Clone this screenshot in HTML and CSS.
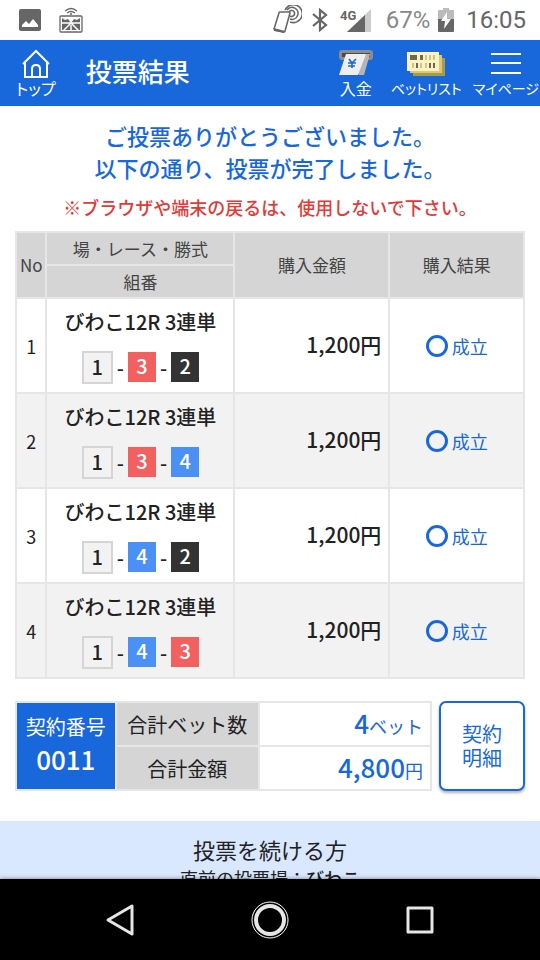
FILE: index.html
```
<!DOCTYPE html>
<html lang="ja">
  <head>
    <meta charset="UTF-8" />
    <meta name="viewport" content="width=device-width, initial-scale=1.0" />
    <title>投票結果</title>
    <link rel="stylesheet" href="styles.css">
  </head>
  <body>
    <div class="status">
      <svg class="status-photo" width="22" height="22" viewBox="0 0 22 22">
        <rect width="22" height="22" rx="2" fill="#666" />
        <path d="M3 18v-2l4-4 3 3 4-5 5 6v2z" fill="#fff" />
      </svg>
      <svg class="status-cast" width="24" height="26" viewBox="0 0 24 26">
        <g fill="none" stroke="#666" stroke-width="1.3">
          <path d="M6 4q6-5 12 0M8 6q4-3 8 0" />
          <rect x="1" y="9" width="22" height="16" rx="1" />
        </g>
        <circle cx="12" cy="7" r="1" fill="#666" />
        <path d="M3 11l3 2 3-1 3 4 3-4 3 1 3-2v12H3z" fill="#666" />
        <path d="M2 16h20M12 16l-8 8M12 16l8 8M12 18v5" stroke="#fff" stroke-width="1.5" />
      </svg>
      <svg class="status-phone" width="30" height="30" viewBox="0 0 30 30" fill="none" stroke="#666">
        <path d="M15 5a6 6 0 1 1 3 9M13 5a9 9 0 1 1 5 12M17 7a3 3 0 1 1 1 4" stroke-width="1.600" />
        <path d="M8 7h9q1 0 1 1l-5 18q0 1-1 1l-9-2q-1 0-1-1L7 8q0-1 1-1z" fill="#fff" stroke-width="1.600" />
        <path d="M2 23l11 3-1 2-10-2z" fill="#666" stroke="none" />
      </svg>
      <svg class="status-bt" width="16" height="24" viewBox="0 0 16 24" fill="none" stroke="#666" stroke-width="2.200">
        <path d="M1 6l13 11-6 5V2l6 5L1 18" />
      </svg>
      <svg class="status-signal" width="32" height="26" viewBox="0 0 32 26">
        <text x="0" y="13" class="net">4G</text>
        <path d="M31 2v23H7z" fill="#ccc" />
        <path d="M25 8v17H7z" fill="#666" />
      </svg>
      <span class="battery-text">67%</span>
      <svg class="status-battery" width="16" height="24" viewBox="0 0 16 24">
        <path d="M5 0h6v2h4q1 0 1 1v9H0V3q0-1 1-1h4z" fill="#bbb" />
        <path d="M0 11h16v12q0 1-1 1H1q-1 0-1-1z" fill="#666" />
        <path d="M9 4l-6 9h4l-1 8 7-10H9z" fill="#fff" />
      </svg>
      <span class="clock">16:05</span>
    </div>

    <header class="header">
      <a class="nav-link home" href="#">
        <svg width="30" height="30" viewBox="0 0 30 30" fill="none" stroke="#fff" stroke-width="2">
          <path d="M2 16L15 3l13 13M4 14v15h22V14" />
          <path d="M11 29v-8q0-4 4-4t4 4v8" />
        </svg>
        トップ
      </a>
      <h1>投票結果</h1>
      <nav class="menu">
        <a class="nav-link deposit" href="#">
          <svg width="34" height="30" viewBox="0 0 34 30">
            <rect x="0" y="2" width="34" height="10" rx="3" fill="#8c8c8c" />
            <rect x="3" y="5" width="28" height="4" fill="#4a4a4a" />
            <path d="M10 6h21l-6 21h-5z" fill="#b5b5b5" />
            <path d="M7 6h20l-8 21H0z" fill="#eee" />
            <path d="M10 11l3 4 4-4M9 15h8M9 18h7M13 14v6" fill="none" stroke="#1868db" stroke-width="1.600" />
          </svg>
          入金
        </a>
        <a class="nav-link" href="#">
          <svg width="40" height="30" viewBox="0 0 40 30">
            <path d="M7 10h32v18H7z" fill="#a89a50" />
            <path d="M4 7h32v18H4z" fill="#d9c978" />
            <path d="M1 4h32v19H1z" fill="#fff2bd" />
            <path d="M4 7h7v5H4zM14 7h3v5h-3zM10 15h2v5h-2zM23 15h2v5h-2zM27 15h2v5h-2z" fill="#6c6858" />
            <path d="M20 7v5M24 7v5M28 7v5M7 15v5M15 15v5M20 15v5" stroke="#cfc398" stroke-width="2" />
          </svg>
          ベットリスト
        </a>
        <a class="nav-link" href="#">
          <svg width="32" height="30" viewBox="0 0 32 30" stroke="#fff" stroke-width="2">
            <path d="M1 6h30M1 15h30M1 25h30" />
          </svg>
          マイページ
        </a>
      </nav>
    </header>

    <main>
      <p class="thanks">ご投票ありがとうございました。<br />以下の通り、投票が完了しました。</p>
      <p class="red">※ブラウザや端末の戻るは、使用しないで下さい。</p>

      <table class="result">
        <colgroup>
          <col class="col-no" />
          <col class="col-race" />
          <col class="col-price" />
          <col />
        </colgroup>
        <thead>
          <tr>
            <th rowspan="2">No</th>
            <th>場・レース・勝式</th>
            <th rowspan="2">購入金額</th>
            <th rowspan="2">購入結果</th>
          </tr>
          <tr>
            <th>組番</th>
          </tr>
        </thead>
        <tbody>
          <tr>
            <td>1</td>
            <td>
              <div class="race">びわこ12R 3連単</div>
              <div class="numbers">
                <span class="num num1">1</span>-<span class="num num3">3</span>-<span class="num num2">2</span>
              </div>
            </td>
            <td class="price">1,200円</td>
            <td><span class="ok">成立</span></td>
          </tr>
          <tr>
            <td>2</td>
            <td>
              <div class="race">びわこ12R 3連単</div>
              <div class="numbers">
                <span class="num num1">1</span>-<span class="num num3">3</span>-<span class="num num4">4</span>
              </div>
            </td>
            <td class="price">1,200円</td>
            <td><span class="ok">成立</span></td>
          </tr>
          <tr>
            <td>3</td>
            <td>
              <div class="race">びわこ12R 3連単</div>
              <div class="numbers">
                <span class="num num1">1</span>-<span class="num num4">4</span>-<span class="num num2">2</span>
              </div>
            </td>
            <td class="price">1,200円</td>
            <td><span class="ok">成立</span></td>
          </tr>
          <tr>
            <td>4</td>
            <td>
              <div class="race">びわこ12R 3連単</div>
              <div class="numbers">
                <span class="num num1">1</span>-<span class="num num4">4</span>-<span class="num num3">3</span>
              </div>
            </td>
            <td class="price">1,200円</td>
            <td><span class="ok">成立</span></td>
          </tr>
        </tbody>
      </table>

      <div class="summary">
        <table class="total">
          <colgroup>
            <col class="col-contract" />
            <col class="col-label" />
            <col />
          </colgroup>
          <tr>
            <td class="contract" rowspan="2">契約番号<br /><strong>0011</strong></td>
            <th>合計ベット数</th>
            <td class="value"><strong>4</strong>ベット</td>
          </tr>
          <tr>
            <th>合計金額</th>
            <td class="value"><strong>4,800</strong>円</td>
          </tr>
        </table>
        <button class="detail" type="button">契約<br />明細</button>
      </div>

      <section class="continue">
        <h2>投票を続ける方</h2>
        <p>直前の投票場：<b>びわこ</b></p>
      </section>
    </main>

    <footer class="android">
      <button type="button" aria-label="戻る">
        <svg width="40" height="40" viewBox="0 0 40 40" fill="none" stroke="#e6e6e6" stroke-width="3" stroke-linejoin="round">
          <path d="M32 6v28L8 20z" />
        </svg>
      </button>
      <button type="button" aria-label="ホーム">
        <svg width="40" height="40" viewBox="0 0 40 40" fill="none">
          <circle cx="20" cy="20" r="18" stroke="#fff" />
          <circle cx="20" cy="20" r="14" stroke="#e6e6e6" stroke-width="4" />
        </svg>
      </button>
      <button type="button" aria-label="履歴">
        <svg width="40" height="40" viewBox="0 0 40 40" fill="none" stroke="#e6e6e6" stroke-width="3" stroke-linejoin="round">
          <rect x="8" y="8" width="24" height="24" />
        </svg>
      </button>
    </footer>
  </body>
</html>
```
FILE: styles.css
```
* {
  box-sizing: border-box;
}
body {
  margin: 0;
  height: 100vh;
  display: flex;
  flex-direction: column;
  background-color: #fff;
  color: #222;
  font-family: "Noto Sans CJK JP", sans-serif;
  font-size: 18px;
}
h1,
h2,
p {
  margin: 0;
}
strong,
b {
  font-weight: 500;
}
svg {
  display: block;
  flex: none;
}

/* ステータスバー */
.status {
  display: flex;
  align-items: center;
  height: 40px;
  padding: 0 14px 0 19px;
  color: #666;
  font-family: Roboto, sans-serif;
  font-size: 24px;
}
.status-cast {
  margin-left: 18px;
}
.status-phone {
  margin-left: auto;
}
.status-bt {
  margin-left: 10px;
}
.status-signal {
  margin-left: 12px;
}
.net {
  font-size: 13px;
  font-weight: 700;
  fill: #666;
}
.battery-text {
  margin-left: 14px;
  color: #888;
}
.status-battery {
  margin-left: 8px;
}
.clock {
  margin-left: 12px;
}

/* ヘッダー */
.header {
  display: flex;
  align-items: center;
  height: 66px;
  padding: 0 1px 0 16px;
  background-color: #1868db;
  color: #fff;
}
.header h1 {
  margin-left: 30px;
  padding-bottom: 6px;
  font-size: 26px;
  font-weight: 500;
}
.nav-link {
  display: flex;
  flex-direction: column;
  align-items: center;
  color: #fff;
  font-size: 14px;
  line-height: 20px;
  font-feature-settings: "palt";
  text-decoration: none;
  white-space: nowrap;
}
.home,
.deposit {
  font-size: 16px;
}
.menu {
  display: flex;
  gap: 11px;
  margin-left: auto;
}
.deposit {
  margin-right: 7px;
}

main {
  flex: 1;
  min-height: 0;
  overflow: hidden;
}
.thanks {
  margin-top: 13px;
  color: #1868db;
  font-size: 22px;
  font-weight: 500;
  line-height: 32px;
  text-align: center;
}
.red {
  margin-top: 8px;
  color: #e53935;
  font-weight: 500;
  line-height: 32px;
  text-align: center;
}

table {
  border-collapse: collapse;
  table-layout: fixed;
}
th,
td {
  padding: 0;
  border: 2px solid #e6e6e6;
  text-align: center;
}
th {
  background-color: #d5d5d5;
  font-weight: 400;
}

/* 投票結果 */
.result {
  width: calc(100% - 30px);
  margin: 8px 15px 0;
}
.result th {
  height: 33px;
  color: #444;
  font-size: 17px;
  line-height: 24px;
}
.col-no {
  width: 6%;
}
.col-race {
  width: 37%;
}
.col-price {
  width: 30.5%;
}
.result td {
  height: 95px;
}
.result tbody tr:nth-child(even) {
  background-color: #f2f2f2;
}
.race {
  font-size: 20px;
  font-weight: 500;
  line-height: 28px;
}
.numbers {
  display: flex;
  justify-content: center;
  align-items: center;
  gap: 4px;
  margin-top: 15px;
  font-size: 20px;
  font-weight: 500;
}
.num {
  width: 28px;
  height: 30px;
  line-height: 28px;
  color: #fff;
}
.num1 {
  width: 31px;
  height: 33px;
  border: 2px solid #d5d5d5;
  background-color: #f2f2f2;
  color: #222;
}
.num2 {
  background-color: #333;
}
.num3 {
  background-color: #f26060;
}
.num4 {
  background-color: #4a90f5;
}
.result .price {
  padding: 0 7px 3px 0;
  font-size: 21px;
  font-weight: 500;
  text-align: right;
}
.ok {
  display: flex;
  justify-content: center;
  align-items: center;
  gap: 4px;
  color: #1868db;
}
.ok::before {
  content: "";
  width: 16px;
  height: 16px;
  border: 3px solid #1868db;
  border-radius: 50%;
}

/* 合計 */
.summary {
  display: flex;
  gap: 7px;
  margin: 22px 15px 0;
}
.total {
  flex: 1;
  font-size: 20px;
}
.total th,
.total td {
  height: 44px;
}
.total strong {
  font-size: 26px;
}
.col-contract {
  width: 24%;
}
.col-label {
  width: 34.5%;
}
.total .contract {
  padding-bottom: 4px;
  background-color: #1868db;
  color: #fff;
  line-height: 32px;
}
.total .value {
  padding-right: 7px;
  color: #1868db;
  font-size: 18px;
  line-height: 32px;
  text-align: right;
}
.detail {
  width: 86px;
  padding: 0;
  border: 2px solid #1868db;
  border-radius: 7px;
  background-color: #fff;
  box-shadow: 0 2px 3px rgba(0, 0, 0, 0.3);
  color: #1868db;
  font-family: inherit;
  font-size: 20px;
  line-height: 24px;
}

.continue {
  margin-top: 30px;
  padding: 12px 0;
  background-color: #d9e8ff;
  text-align: center;
}
.continue h2 {
  font-size: 22px;
  font-weight: 400;
  line-height: 32px;
}
.continue p {
  line-height: 26px;
}

/* ナビゲーションバー */
.android {
  display: flex;
  justify-content: center;
  align-items: center;
  gap: 110px;
  height: 81px;
  background-color: #000;
  box-shadow: 0 0 4px rgba(0, 0, 0, 0.5);
}
.android button {
  padding: 0;
  border: 0;
  background: none;
}
```
